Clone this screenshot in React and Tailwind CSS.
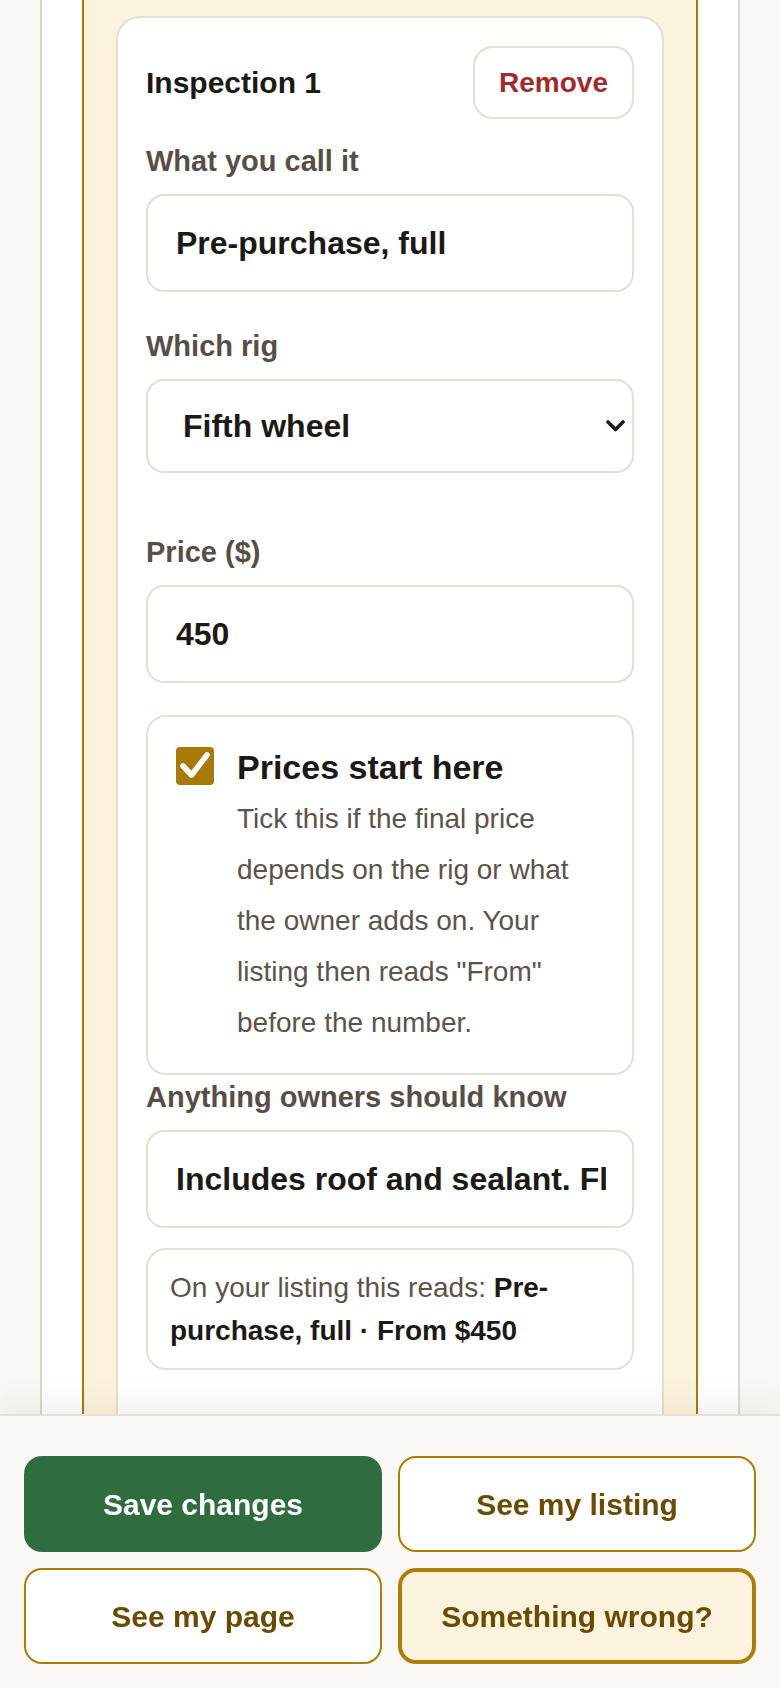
import React from "react";

function Label({ children, className = "" }) {
  return (
    <label className={"block text-[29px] leading-[44px] font-bold text-[#574f47] mb-[11px] " + className}>
      {children}
    </label>
  );
}

function TextInput({ value }) {
  return (
    <input
      type="text"
      defaultValue={value}
      className="block h-[98px] w-full rounded-[18px] border-2 border-[#e4dfd4] bg-white pl-[28px] pr-[26px] text-[32px] font-bold text-[#1c1917] outline-none"
    />
  );
}

export default function App() {
  return (
    <div className="min-h-screen bg-[#faf8f4] font-['Liberation_Sans',Arial,sans-serif]">
      <div className="mx-[40px] border-x-2 border-[#ddd7cb] bg-white px-[40px]">
        <div className="border-x-2 border-[#a87a0a] bg-[#fcf3de] px-[32px] pt-[16px] pb-[150px]">
          <div className="rounded-[24px] border-2 border-[#e4dfd4] bg-white px-[28px] pt-[28px] pb-[100px]">
            <div className="flex h-[73px] items-center justify-between">
              <h3 className="text-[30px] font-bold text-[#1c1917]">Inspection 1</h3>
              <button className="flex h-[73px] items-center rounded-[20px] border-2 border-[#e4dfd4] bg-white px-[24px] text-[28px] font-bold text-[#a12b2b]">
                Remove
              </button>
            </div>

            <div className="mt-[20px] mb-[32px]">
              <Label>What you call it</Label>
              <TextInput value="Pre-purchase, full" />
            </div>

            <div className="mb-[57px]">
              <Label>Which rig</Label>
              <div className="relative">
                <select
                  defaultValue="fifth"
                  className="block h-[94px] w-full appearance-none rounded-[18px] border-2 border-[#e4dfd4] bg-white pl-[35px] pr-[40px] text-[32px] font-bold text-[#1c1917] outline-none"
                >
                  <option value="travel">Travel trailer</option>
                  <option value="fifth">Fifth wheel</option>
                  <option value="motor">Motorhome</option>
                </select>
                <svg
                  className="pointer-events-none absolute right-[9px] top-1/2 -translate-y-1/2"
                  width="19"
                  height="12"
                  viewBox="0 0 19 12"
                  fill="none"
                >
                  <polyline points="2,2 9.5,9.5 17,2" stroke="#1c1917" strokeWidth="3.6" strokeLinecap="round" strokeLinejoin="round" />
                </svg>
              </div>
            </div>

            <div className="mb-[32px]">
              <Label>Price ($)</Label>
              <TextInput value="450" />
            </div>

            <div className="flex gap-[23px] rounded-[20px] border-2 border-[#e4dfd4] bg-white pl-[28px] pr-[28px] pt-[30px] pb-[25px]">
              <div className="flex h-[38px] w-[38px] shrink-0 items-center justify-center rounded-[4px] bg-[#a87a0a]">
                <svg width="38" height="38" viewBox="0 0 38 38" fill="none">
                  <polyline points="7,19 15.5,28 31,8" stroke="#ffffff" strokeWidth="5.5" strokeLinecap="round" strokeLinejoin="round" />
                </svg>
              </div>
              <div className="min-w-0 flex-1">
                <div className="mb-[5px] text-[34px] leading-[41px] font-bold text-[#1c1917]">Prices start here</div>
                <p className="text-[28px] leading-[51px] text-[#5c534a]">
                  Tick this if the final price depends on the rig or what the owner adds on. Your listing then reads "From" before the number.
                </p>
              </div>
            </div>

            <div>
              <Label className="mb-[10px]">Anything owners should know</Label>
              <TextInput value="Includes roof and sealant. Flashing checked on request." />
            </div>

            <div className="mt-[20px] rounded-[20px] border-2 border-[#e4dfd4] bg-white px-[22px] py-[16px] text-[28px] leading-[43px] text-[#5c534a]">
              On your listing this reads:{" "}
              <span className="font-bold text-[#1c1917]">Pre-purchase, full · From $450</span>
            </div>
          </div>
        </div>
      </div>

      <div className="fixed inset-x-0 bottom-0 grid grid-cols-2 gap-[16px] border-t-2 border-[#e6e1d7] bg-[#faf8f4] px-[24px] pt-[40px] pb-[24px] shadow-[0_-10px_30px_rgba(60,40,0,0.07)]">
        <button className="h-[96px] rounded-[18px] bg-[#2f6d41] text-[30px] font-bold text-white">Save changes</button>
        <button className="h-[96px] rounded-[18px] border-2 border-[#ad7d0c] bg-white text-[30px] font-bold text-[#6b4a04]">See my listing</button>
        <button className="h-[96px] rounded-[18px] border-2 border-[#ad7d0c] bg-white text-[30px] font-bold text-[#6b4a04]">See my page</button>
        <button className="h-[96px] rounded-[18px] border-4 border-[#ad7d0c] bg-[#fcf3de] text-[30px] font-bold text-[#6b4a04]">Something wrong?</button>
      </div>
    </div>
  );
}
